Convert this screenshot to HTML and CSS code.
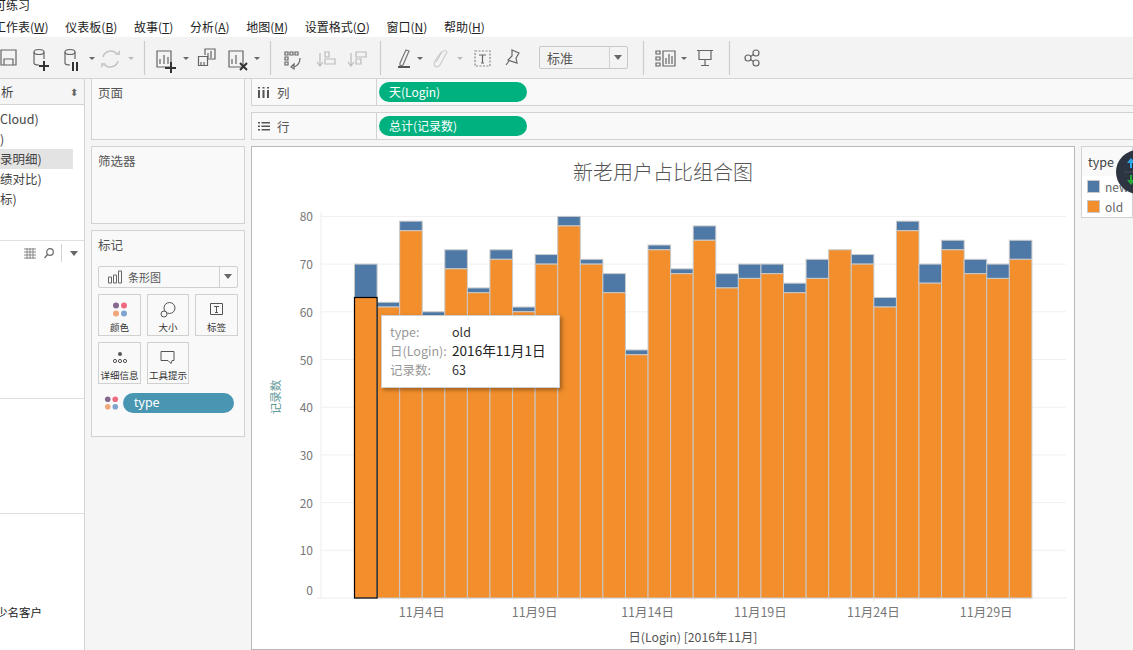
FILE: index.html
```html
<!DOCTYPE html>
<html lang="zh-CN">
<head>
<meta charset="utf-8">
<title>练习</title>
<link rel="stylesheet" href="styles.css">
</head>
<body>
<div class="app">
  <div class="titlebar">可练习</div>
  <nav class="menubar">
    <span>工作表(<u>W</u>)</span><span>仪表板(<u>B</u>)</span><span>故事(<u>T</u>)</span><span>分析(<u>A</u>)</span><span>地图(<u>M</u>)</span><span>设置格式(<u>O</u>)</span><span>窗口(<u>N</u>)</span><span>帮助(<u>H</u>)</span>
  </nav>
  <div class="toolbar">
    <svg class="tools" width="800" height="41" viewBox="0 0 800 41" fill="none" stroke="#666" stroke-width="1.2">
      <path d="M1 13h15v15H1zM4 28v-6h9v6"/>
      <ellipse cx="39" cy="15" rx="5" ry="2.5"/><path d="M34 15v11q0 2 5 2M44 15v7"/><path d="M44 24v10M39 29h10" stroke="#333" stroke-width="2"/>
      <ellipse cx="70" cy="15" rx="5" ry="2.5"/><path d="M65 15v11q0 2 5 2M75 15v7"/><path d="M73 25v9M77 25v9" stroke="#333" stroke-width="2"/>
      <path d="M89 20h6l-3 3z" fill="#666" stroke="none"/>
      <path d="M103 20a8 8 0 0 1 14-3M118 24a8 8 0 0 1-14 3" stroke="#c4c4c4" stroke-width="1.5"/><path d="M115 18h5v-5zM106 26h-5v5z" fill="#ccc" stroke="none"/>
      <path d="M128 20h6l-3 3z" fill="#bbb" stroke="none"/>
      <path d="M144.500 4v34" stroke="#ccc"/>
      <path d="M157 14h14v16h-14zM160 27v-5M164 27v-9M168 27v-7"/><path d="M171 25v11M165 31h11" stroke="#333" stroke-width="2"/>
      <path d="M183 20h6l-3 3z" fill="#666" stroke="none"/>
      <path d="M205 18v-6h10v10h-7M208 21v-5M211 21v-7"/><path d="M198.500 19.500h9v9h-9zM201 28v-3M204 28v-3"/>
      <path d="M229 14h14v16h-14zM232 27v-5M236 27v-9"/><path d="M240 26l7 7M247 26l-7 7" stroke="#333" stroke-width="2"/>
      <path d="M254 20h6l-3 3z" fill="#666" stroke="none"/>
      <path d="M270.500 4v34" stroke="#ccc"/>
      <path d="M285 15h3v3h-3zM290 15h3v3h-3zM295 15h3v3h-3zM285 20h3v3h-3zM285 25h3v3h-3zM300 21q0 7-6 9M291 30l3-3v5z"/>
      <path d="M320 16v12M317 25l3 4 3-4M325 15h4v5h-4zM325 22h10v5h-10z" stroke="#bbb"/>
      <path d="M351 16v12M348 25l3 4 3-4M356 15h10v5h-10zM356 22h5v5h-5z" stroke="#bbb"/>
      <path d="M380.500 4v34" stroke="#ccc"/>
      <path d="M400 26l6-13 3 1-6 14-3 1z" stroke="#777"/><path d="M398 30h12" stroke="#555" stroke-width="2"/>
      <path d="M417 20h6l-3 3z" fill="#666" stroke="none"/>
      <path d="M436 25l6-10q3-3 5 0l-7 13q-3 3-5 1t0-5l6-9" stroke="#ccc"/>
      <path d="M457 20h6l-3 3z" fill="#bbb" stroke="none"/>
      <path d="M475 14h15v15h-15z" stroke-dasharray="2 1.5" stroke="#888"/><path d="M479 18h7M482.500 18v8M481 26h3"/>
      <path d="M512 13l7 3-3 5 1 5-9-3 4-4zM509 24l-3 4"/>
      <path d="M643.500 4v34" stroke="#ccc"/>
      <path d="M656 14h4v3h-4zM656 20h4v3h-4zM656 26h4v3h-4zM663 14h12v15h-12zM666 27v-6M669 27v-10M672 27v-8"/>
      <path d="M681 20h6l-3 3z" fill="#666" stroke="none"/>
      <path d="M697 13.500h16M699 13.500v9h12v-9M705 22.500v6M701 28.500h8"/>
      <path d="M729.500 4v34" stroke="#ccc"/>
      <circle cx="756" cy="16" r="3"/><circle cx="756" cy="26" r="3"/><circle cx="748" cy="21" r="3"/><path d="M750.500 19.500l3-2M750.500 22.500l3 2"/>
    </svg>
    <div class="select"><span>标准</span><i class="select-arrow"></i></div>
  </div>
  <main class="workspace">
    <aside class="datapane">
      <div class="pane-head"><span>析</span><span class="updown">⬍</span></div>
      <ul class="sources">
        <li>Cloud)</li><li>)</li><li class="active">录明细)</li><li>绩对比)</li><li>标)</li>
      </ul>
      <div class="fields-head"><svg width="12" height="11" viewBox="0 0 12 11" stroke="#888"><path d="M0 1h12M0 4h12M0 7h12M0 10h12M3 0v11M6 0v11M9 0v11"/></svg><svg class="search" width="10" height="11" viewBox="0 0 10 11" fill="none" stroke="#666" stroke-width="1.200"><circle cx="6" cy="4" r="3.300"/><path d="M3.500 6.500l-3 3.500"/></svg><b></b><i class="caret"></i></div>
      <div class="section-a"></div>
      <div class="section-b"></div>
      <div class="section-c"><span>少名客户</span></div>
    </aside>
    <section class="cards">
      <div class="card pages"><h3>页面</h3></div>
      <div class="card filters"><h3>筛选器</h3></div>
      <div class="card marks">
        <h3>标记</h3>
        <div class="mark-type">
          <svg width="15" height="14" viewBox="0 0 15 14" fill="none" stroke="#666"><path d="M.5 7h3v6h-3zM5.500 5h3v8h-3zM10.500 1h3v12h-3z"/></svg>
          <span>条形图</span><i class="select-arrow"></i>
        </div>
        <div class="mark-grid">
          <div class="mark-btn"><svg width="16" height="16" viewBox="0 0 16 16"><circle cx="4" cy="3.500" r="3" fill="#86698f"/><circle cx="12" cy="3.500" r="3" fill="#ef6a80"/><circle cx="4" cy="11.500" r="3" fill="#f2a77a"/><circle cx="12" cy="11.500" r="3" fill="#7ea3cf"/></svg><span>颜色</span></div>
          <div class="mark-btn"><svg width="16" height="16" viewBox="0 0 16 16" fill="none" stroke="#555"><circle cx="9.500" cy="6" r="5.500"/><circle cx="4" cy="12" r="3" fill="#f6f6f6"/></svg><span>大小</span></div>
          <div class="mark-btn"><svg width="14" height="14" viewBox="0 0 14 14" fill="none" stroke="#555"><path d="M.5.500h12v11H.500zM4 3.500h5M6.500 3.500v6M5 9.500h3"/></svg><span>标签</span></div>
          <div class="mark-btn"><svg width="16" height="14" viewBox="0 0 16 14" fill="none" stroke="#555"><circle cx="8" cy="3" r="2" fill="#555" stroke="none"/><circle cx="3" cy="10" r="1.600"/><circle cx="8" cy="10" r="1.600"/><circle cx="13" cy="10" r="1.600"/></svg><span>详细信息</span></div>
          <div class="mark-btn"><svg width="16" height="14" viewBox="0 0 16 14" fill="none" stroke="#555"><path d="M1 .500h13v9h-2l-1 3-3-3H1z"/></svg><span>工具提示</span></div>
        </div>
        <div class="mark-pill">
          <svg width="15" height="15" viewBox="0 0 16 16"><circle cx="4" cy="3.500" r="3" fill="#86698f"/><circle cx="12" cy="3.500" r="3" fill="#ef6a80"/><circle cx="4" cy="11.500" r="3" fill="#f2a77a"/><circle cx="12" cy="11.500" r="3" fill="#7ea3cf"/></svg>
          <span class="pill-type">type</span>
        </div>
      </div>
    </section>
    <section class="view">
      <div class="shelf">
        <div class="shelf-label"><svg width="12" height="11" viewBox="0 0 12 11" fill="#555"><path d="M0 3h2v8H0zM4.500 3h2v8h-2zM9 3h2v8H9zM0 0h2v1.500H0zM4.500 0h2v1.500h-2zM9 0h2v1.500H9z"/></svg><span>列</span></div>
        <div class="shelf-body"><span class="pill-green">天(Login)</span></div>
      </div>
      <div class="shelf shelf-second">
        <div class="shelf-label"><svg width="12" height="11" viewBox="0 0 12 11" fill="#555"><path d="M0 1h2v1.500H0zM0 4.500h2V6H0zM0 8h2v1.500H0zM3.500 1H12v1.500H3.500zM3.500 4.500H12V6H3.500zM3.500 8H12v1.500H3.500z"/></svg><span>行</span></div>
        <div class="shelf-body"><span class="pill-green">总计(记录数)</span></div>
      </div>
      <div class="chart-row">
        <div class="chart" id="chart">
          <h1>新老用户占比组合图</h1>
          <svg id="plot" class="plot" width="822" height="503" viewBox="252 147 822 503"></svg>
          <div class="tooltip">
            <span class="k">type:</span><span>old</span>
            <span class="k">日(Login):</span><span class="tip-date">2016年11月1日</span>
            <span class="k">记录数:</span><span>63</span>
          </div>
        </div>
        <div class="legend">
          <h4>type</h4>
          <div class="legend-item"><i class="sw blue"></i><span>new</span></div>
          <div class="legend-item"><i class="sw orange"></i><span>old</span></div>
        </div>
      </div>
    </section>
  </main>
  <div class="float-ball">
    <svg width="15" height="42" viewBox="0 0 15 42"><path d="M7 7l4 5H8v5H6v-5H3z" fill="#2ea6e8"/><path d="M7 34l4-5H8v-5H6v5H3z" fill="#25a83a"/><path d="M0 21h15" stroke="#44505c"/></svg>
  </div>
</div>
<script src="chart.js"></script>
</body>
</html>
```

FILE: chart.js
```js
var old = [63,61,77,59,69,64,71,60,70,78,70,64,51,73,68,75,65,67,68,64,67,73,70,61,77,66,73,68,67,71];
var total = [70,62,79,60,73,65,73,61,72,80,71,68,52,74,69,78,68,70,70,66,71,73,72,63,79,70,75,71,70,75];
var x0 = 354.5, w = 22.58, y0 = 598, u = 4.77;
var s = '';
[80,70,60,50,40,30,20,10].forEach(function (v) {
  var y = y0 - v * u;
  s += '<path d="M321 ' + y + 'H1066" class="grid"/>';
  s += '<text x="313" y="' + (y + 5) + '" class="tick" text-anchor="end">' + v + '</text>';
});
s += '<path d="M321 212V598M316 598H1066" class="axis"/>';
s += '<text x="313" y="595" class="tick" text-anchor="end">0</text>';
for (var i = 0; i < 30; i++) {
  var x = x0 + i * w;
  var yo = y0 - old[i] * u, yt = y0 - total[i] * u;
  if (total[i] > old[i]) s += '<rect x="' + x + '" y="' + yt + '" width="' + w + '" height="' + (yo - yt) + '" class="new"/>';
  s += '<rect x="' + x + '" y="' + yo + '" width="' + w + '" height="' + (y0 - yo) + '" class="old"/>';
}
s += '<rect x="' + x0 + '" y="' + (y0 - 63 * u) + '" width="' + w + '" height="' + (63 * u) + '" class="sel"/>';
[3,8,13,18,23,28].forEach(function (d) {
  var x = x0 + d * w;
  s += '<path d="M' + x + ' 598v4" class="axis"/>';
  s += '<text x="' + (x - 0.5) + '" y="617" class="tick tick-date" text-anchor="middle">11月' + (d + 1) + '日</text>';
});
s += '<text x="693" y="642" class="axis-title" text-anchor="middle">日(Login) [2016年11月]</text>';
s += '<text transform="translate(280 397) rotate(-90)" class="y-title" text-anchor="middle">记录数</text>';
document.getElementById('plot').innerHTML = s;
```

FILE: styles.css
```css
* { box-sizing: border-box; }
html, body { margin: 0; padding: 0; height: 100%; overflow: hidden; background: #fff; }
body { font-family: "Noto Sans CJK SC", "Noto Sans", sans-serif; color: #333; font-size: 12px; }
ul, h1, h3, h4 { margin: 0; padding: 0; font-weight: 400; }
.app { width: 1133px; height: 650px; display: flex; flex-direction: column; overflow: hidden; position: relative; }
.titlebar { height: 18px; margin-left: -6px; font-size: 12px; line-height: 10px; color: #222; flex: none; background: #fff; }
.menubar { height: 19px; display: flex; gap: 16.700px; margin-left: -6px; font-size: 12px; line-height: 18px; flex: none; color: #222; white-space: nowrap; background: #fff; }
.menubar u { text-underline-offset: 1px; }
.toolbar { height: 42px; flex: none; background: #f3f3f3; position: relative; border-bottom: 1px solid #d4d4d4; }
.tools { display: block; }
.select { position: absolute; left: 539px; top: 9px; width: 89px; height: 23px; border: 1px solid #c8c8c8; border-radius: 2px; background: #f3f3f3; display: flex; align-items: center; padding-left: 7px; font-size: 13px; color: #555; }
.select-arrow { margin-left: auto; width: 18px; align-self: stretch; border-left: 1px solid #d0d0d0; position: relative; flex: none; }
.select-arrow::after { content: ""; position: absolute; left: 4px; top: 8px; border: 4.500px solid transparent; border-top: 5px solid #666; border-bottom: 0; }
.workspace { flex: 1; display: flex; background: #f5f5f5; min-height: 0; }
.datapane { width: 85px; flex: none; background: #fff; border-right: 1px solid #d4d4d4; display: flex; flex-direction: column; }
.pane-head { height: 26px; background: #f5f5f5; border-bottom: 1px solid #d4d4d4; display: flex; justify-content: space-between; align-items: center; padding: 0 6px 0 1px; font-size: 12.500px; color: #444; flex: none; }
.updown { font-size: 10px; color: #666; }
.sources { list-style: none; height: 136px; padding-top: 4px; flex: none; border-bottom: 1px solid #e0e0e0; }
.sources li { height: 20px; line-height: 20px; color: #444; font-size: 12.500px; width: 73px; white-space: nowrap; }
.sources .active { background: #e3e3e3; }
.fields-head { height: 24px; display: flex; align-items: center; justify-content: flex-end; gap: 8px; padding-right: 6px; flex: none; }
.fields-head .search { margin-right: -1px; }
.fields-head b { width: 1px; height: 18px; background: #d4d4d4; }
.caret { border: 4px solid transparent; border-top: 5px solid #666; border-bottom: 0; }
.section-a { height: 134px; flex: none; border-bottom: 1px solid #e0e0e0; }
.section-b { height: 115px; flex: none; border-bottom: 1px solid #e0e0e0; }
.section-c { flex: 1; padding-top: 90px; color: #222; font-size: 11.500px; line-height: 16px; }
.section-c span { display: block; margin-left: -4px; white-space: nowrap; }
.cards { width: 154px; flex: none; margin-left: 6px; display: flex; flex-direction: column; gap: 6px; }
.card { background: #f9f9f9; border: 1px solid #d2d2d2; padding: 6px; }
.card h3 { font-size: 12.500px; line-height: 16px; color: #555; }
.pages { height: 61px; border-top: 0; }
.filters { height: 78px; }
.marks { height: 207px; }
.mark-type { height: 22px; margin-top: 13px; border: 1px solid #d0d0d0; border-radius: 2px; display: flex; align-items: center; padding-left: 9px; gap: 5px; color: #555; font-size: 11px; }
.mark-type .select-arrow { width: 18px; }
.mark-type .select-arrow::after { top: 7px; }
.mark-grid { display: grid; grid-template-columns: 43px 42px 43px; gap: 6px; margin-top: 6px; }
.mark-btn { height: 42px; border: 1px solid #d0d0d0; display: flex; flex-direction: column; align-items: center; padding-top: 7px; font-size: 9.500px; line-height: 12px; color: #333; white-space: nowrap; }
.mark-btn svg { height: 16px; margin-bottom: 3px; flex: none; }
.mark-pill { display: flex; align-items: center; gap: 4px; margin-top: 9px; padding-left: 6px; }
.pill-type { width: 111px; height: 20px; border-radius: 10px; background: #4996b2; color: #fff; font-size: 12.500px; line-height: 19px; padding-left: 11px; font-family: "Noto Sans", sans-serif; }
.view { flex: 1; min-width: 0; display: flex; flex-direction: column; margin-left: 6px; }
.shelf { height: 27px; background: #f9f9f9; border-bottom: 1px solid #d2d2d2; border-left: 1px solid #d2d2d2; margin-bottom: 6px; display: flex; flex: none; }
.shelf-second { height: 28px; border-top: 1px solid #d2d2d2; }
.shelf-label { width: 125px; border-right: 1px solid #d2d2d2; display: flex; align-items: center; gap: 7px; padding-left: 6px; font-size: 12.500px; color: #555; flex: none; }
.shelf-body { display: flex; align-items: center; padding-left: 2px; flex: 1; }
.pill-green { width: 148px; height: 20px; border-radius: 10px; background: #00b180; color: #fff; font-size: 12px; line-height: 19px; padding-left: 10px; }
.chart-row { display: flex; gap: 6px; flex: 1; min-height: 0; }
.chart { width: 824px; flex: none; background: #fff; border: 1px solid #b9b9b9; position: relative; }
.chart h1 { position: absolute; left: 0; right: 0; top: 11px; text-align: center; font-size: 20px; line-height: 28px; font-weight: 300; color: #555; }
.plot { display: block; }
.plot .grid { stroke: #f0f0f0; fill: none; }
.plot .axis { stroke: #ececec; fill: none; }
.plot .tick { font-size: 12px; fill: #777; }
.plot .tick-date { font-size: 12.500px; }
.plot .axis-title { font-size: 12.300px; fill: #555; }
.plot .y-title { font-size: 11.500px; fill: #5f9a9a; }
.plot .new { fill: #4e79a7; stroke: #c9c9c9; stroke-width: 1; }
.plot .old { fill: #f28e2b; stroke: #c9c9c9; stroke-width: 1; }
.plot .sel { fill: none; stroke: #000; stroke-width: 1.200; }
.tooltip { position: absolute; left: 129px; top: 168px; width: 179px; height: 73px; background: #fff; border: 1px solid #d0d0d0; box-shadow: 2px 2px 4px rgba(0,0,0,.35); display: grid; grid-template-columns: 62px auto; grid-auto-rows: 19px; align-content: center; padding: 0 0 2px 8px; font-size: 12.500px; color: #333; white-space: nowrap; }
.tooltip .k { color: #999; }
.tooltip .tip-date { font-size: 13.600px; line-height: 19px; color: #222; }
.legend { flex: 1; height: 72px; background: #fff; border: 1px solid #d2d2d2; }
.legend h4 { font-size: 12.500px; line-height: 16px; color: #444; height: 29px; padding: 7px 0 0 6px; background: #f9f9f9; }
.legend-item { display: flex; align-items: center; gap: 5px; height: 20px; padding-left: 5px; font-size: 12px; color: #666; }
.sw { width: 13px; height: 13px; border: 1px solid #c9c9c9; flex: none; }
.sw.blue { background: #4e79a7; }
.sw.orange { background: #f28e2b; }
.float-ball { position: absolute; left: 1116px; top: 150px; width: 44px; height: 44px; border-radius: 50%; background: #2b3440; padding: 1px 0 0 8px; }
```
